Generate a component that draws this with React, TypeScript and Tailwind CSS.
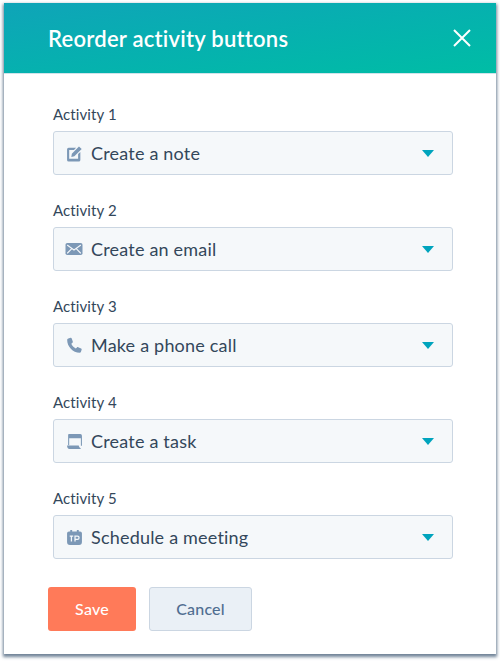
const ACTIVITIES = [
  { label: "Activity 1", value: "Create a note", icon: <NoteIcon /> },
  { label: "Activity 2", value: "Create an email", icon: <EmailIcon /> },
  { label: "Activity 3", value: "Make a phone call", icon: <PhoneIcon /> },
  { label: "Activity 4", value: "Create a task", icon: <TaskIcon /> },
  { label: "Activity 5", value: "Schedule a meeting", icon: <MeetingIcon /> },
];

function NoteIcon() {
  return (
    <svg width="17" height="17" viewBox="0 0 16 16" fill="none">
      <path d="M2.500 2.500H9.500L7.500 4.600H3V13h8.400V8.500l2.100-2V14a1.500 1.500 0 0 1-1.500 1.500H2.500A1.500 1.500 0 0 1 1 14V4a1.500 1.500 0 0 1 1.500-1.500Z" fill="#7c98b6" />
      <path d="M5.500 8.300 12.200 1.400l2.600 2.400-6.900 6.900-2.900.500.500-2.900Z" fill="#7c98b6" />
    </svg>
  );
}

function EmailIcon() {
  return (
    <svg width="18" height="14" viewBox="0 0 18 14" fill="none">
      <rect x="0.500" y="1" width="17" height="12" rx="1.800" fill="#7c98b6" />
      <path d="M2.500 3.300 9 8l6.500-4.700M2.500 11l4.300-4.300M15.500 11l-4.300-4.300" stroke="#f5f8fa" strokeWidth="1.100" strokeLinecap="round" />
    </svg>
  );
}

function PhoneIcon() {
  return (
    <svg width="17" height="17" viewBox="0 0 16 16" fill="none">
      <path d="M2.200 1.300 4.300.8c.5-.1.900.1 1.100.6l1 2.800c.1.400 0 .8-.3 1.100L5 6.300c.8 1.900 2.300 3.500 4.200 4.500l1.100-1c.3-.3.800-.4 1.200-.2l2.700 1.300c.5.200.7.700.5 1.200l-.7 2c-.2.500-.6.800-1.100.8C6.500 14.800 1 9 1.100 2.600c0-.6.500-1.200 1.100-1.300Z" fill="#7c98b6" />
    </svg>
  );
}

function TaskIcon() {
  return (
    <svg width="17" height="17" viewBox="0 0 16 16" fill="none">
      <path d="M2.500 1h11A1.500 1.500 0 0 1 15 2.500v9.500h-1V5H3v6.500H2V5.500H2V2.500A1.500 1.500 0 0 1 2.500 1Z" fill="#7c98b6" />
      <path d="M1 11.800h11c.1 1 .7 1.900 1.800 2.600v.6H3.200C1.900 15 1 13.700 1 11.800Z" fill="#7c98b6" />
    </svg>
  );
}

function MeetingIcon() {
  return (
    <svg width="17" height="17" viewBox="0 0 16 16" fill="none">
      <path d="M2.800 2.300H4V1h1.800v1.300h4.400V1H12v1.300h1.200A1.800 1.800 0 0 1 15 4.100v8.200a2.700 2.700 0 0 1-2.700 2.700H3.700A2.700 2.700 0 0 1 1 12.300V4.100a1.800 1.800 0 0 1 1.800-1.800Z" fill="#7c98b6" />
      <path d="M3.500 6.800h3.300M5.100 6.800v5M8.500 11.800v-5h2.300a1.400 1.400 0 0 1 0 3H8.500" stroke="#f5f8fa" strokeWidth="1.200" />
    </svg>
  );
}

function ActivitySelect({ label, value, icon }: (typeof ACTIVITIES)[number]) {
  return (
    <div className="flex flex-col">
      <label className="text-[15px] leading-[20px] text-[#33475b] mb-[7px] tracking-[0.1px]">{label}</label>
      <div className="h-[44px] flex items-center rounded-[3px] border border-[#cbd6e2] bg-[#f5f8fa] pl-[11px] pr-[18px]">
        <span className="w-[18px] flex items-center justify-center">{icon}</span>
        <span className="ml-[8px] flex-1 text-[18px] text-[#33475b] tracking-[0.2px]">{value}</span>
        <span className="w-0 h-0 border-x-[6.5px] border-x-transparent border-t-[7px] border-t-[#00a4bd]" />
      </div>
    </div>
  );
}

export default function App() {
  return (
    <div className="w-[500px] h-[661px] bg-white pt-[3px] pl-[4px] font-['Lato',sans-serif]">
      <div className="w-[492px] h-[651px] bg-white flex flex-col shadow-[0_2px_3px_1px_rgba(66,91,118,0.75)]">
        <div className="h-[71px] shrink-0 flex items-center justify-between pl-[44px] pr-[24px] bg-gradient-to-br from-[#0fa4b8] to-[#00bda5] border-b border-[#cfe3ea]">
          <h1 className="text-[22px] font-semibold text-white tracking-[0.25px]">Reorder activity buttons</h1>
          <svg width="20" height="20" viewBox="0 0 20 20" fill="none">
            <path d="M2 2l16 16M18 2 2 18" stroke="#fff" strokeWidth="2" />
          </svg>
        </div>
        <div className="flex flex-col flex-1 pl-[44px] pr-[43px] pt-[30px]">
          <div className="flex flex-col gap-[25px] pl-[5px]">
            {ACTIVITIES.map((a) => (
              <ActivitySelect key={a.label} {...a} />
            ))}
          </div>
          <div className="flex gap-[13px] mt-[28px]">
            <button className="w-[88px] h-[44px] rounded-[3px] bg-[#ff7a59] text-white text-[16px] font-medium tracking-[0.2px]">Save</button>
            <button className="w-[103px] h-[44px] rounded-[3px] bg-[#eaf0f6] border border-[#cbd6e2] text-[#506e91] text-[16px] font-medium tracking-[0.2px]">Cancel</button>
          </div>
        </div>
      </div>
    </div>
  );
}
